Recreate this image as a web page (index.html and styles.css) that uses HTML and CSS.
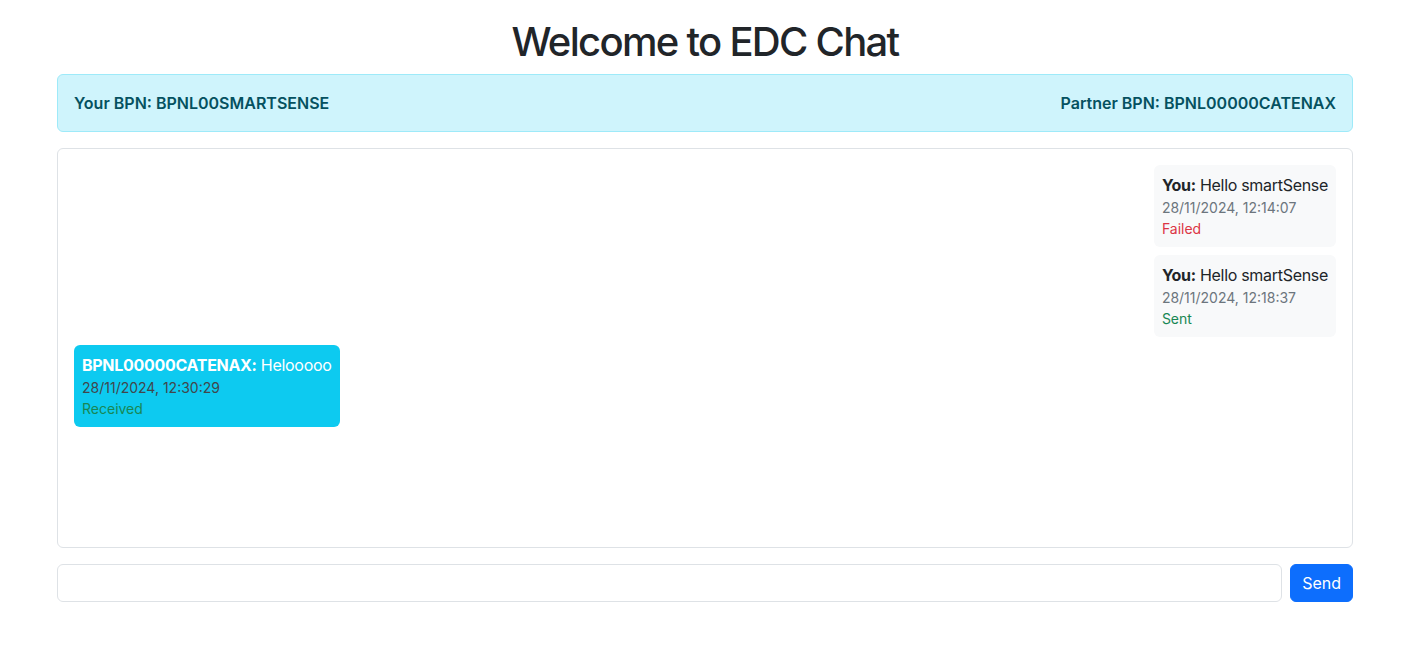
FILE: index.html
```html
<!DOCTYPE html>
<html lang="en">
<head>
<meta charset="utf-8">
<title>EDC Chat</title>
<link rel="stylesheet" href="styles.css">
</head>
<body>
<div class="container">
  <h1 class="title">Welcome to EDC Chat</h1>
  <div class="alert">
    <strong>Your BPN: BPNL00SMARTSENSE</strong>
    <strong>Partner BPN: BPNL00000CATENAX</strong>
  </div>
  <div class="chat">
    <div class="msg sent">
      <div class="line"><strong>You:</strong> Hello smartSense</div>
      <small class="time">28/11/2024, 12:14:07</small>
      <small class="status failed">Failed</small>
    </div>
    <div class="msg sent">
      <div class="line"><strong>You:</strong> Hello smartSense</div>
      <small class="time">28/11/2024, 12:18:37</small>
      <small class="status ok">Sent</small>
    </div>
    <div class="msg received">
      <div class="line"><strong>BPNL00000CATENAX:</strong> Helooooo</div>
      <small class="time">28/11/2024, 12:30:29</small>
      <small class="status ok">Received</small>
    </div>
  </div>
  <div class="composer">
    <input class="input" type="text">
    <button class="btn">Send</button>
  </div>
</div>
</body>
</html>
```
FILE: styles.css
```css
* { box-sizing: border-box; }
body {
  margin: 0;
  font-family: Inter, "Noto Sans", sans-serif;
  font-size: 16px;
  line-height: 1.5;
  color: #212529;
  background: #fff;
}
.container {
  width: 1296px;
  margin-left: 57px;
  padding-top: 18px;
}
.title {
  margin: 0 0 8px;
  font-size: 40px;
  font-weight: 500;
  line-height: 1.2;
  text-align: center;
  letter-spacing: -1.7px;
}
.alert {
  display: flex;
  justify-content: space-between;
  padding: 16px;
  margin-bottom: 16px;
  background: #cff4fc;
  border: 1px solid #9eeaf9;
  border-radius: 6px;
  color: #055160;
}
.alert strong { font-weight: 600; }
.chat {
  height: 400px;
  border: 1px solid #dee2e6;
  border-radius: 6px;
  padding: 16px;
  margin-bottom: 16px;
  display: flex;
  flex-direction: column;
  gap: 8px;
  overflow-y: auto;
}
.msg {
  display: flex;
  flex-direction: column;
  padding: 8px;
  border-radius: 6px;
}
.msg.sent {
  align-self: flex-end;
  background: #f8f9fa;
}
.msg.received {
  align-self: flex-start;
  background: #0dcaf0;
  color: #fff;
}
.line { letter-spacing: -0.3px; }
.msg strong { font-weight: 700; }
.time, .status { font-size: 14px; line-height: 1.5; }
.time { color: #6c757d; }
.msg.received .time { color: #41464b; }
.failed { color: #dc3545; }
.ok { color: #198754; }
.composer {
  display: flex;
  gap: 8px;
}
.input {
  flex: 1;
  height: 38px;
  border: 1px solid #dee2e6;
  border-radius: 6px;
  padding: 6px 12px;
  font: inherit;
}
.btn {
  height: 38px;
  padding: 6px 11px;
  border: 1px solid #0d6efd;
  border-radius: 6px;
  background: #0d6efd;
  color: #fff;
  font: inherit;
}
```
